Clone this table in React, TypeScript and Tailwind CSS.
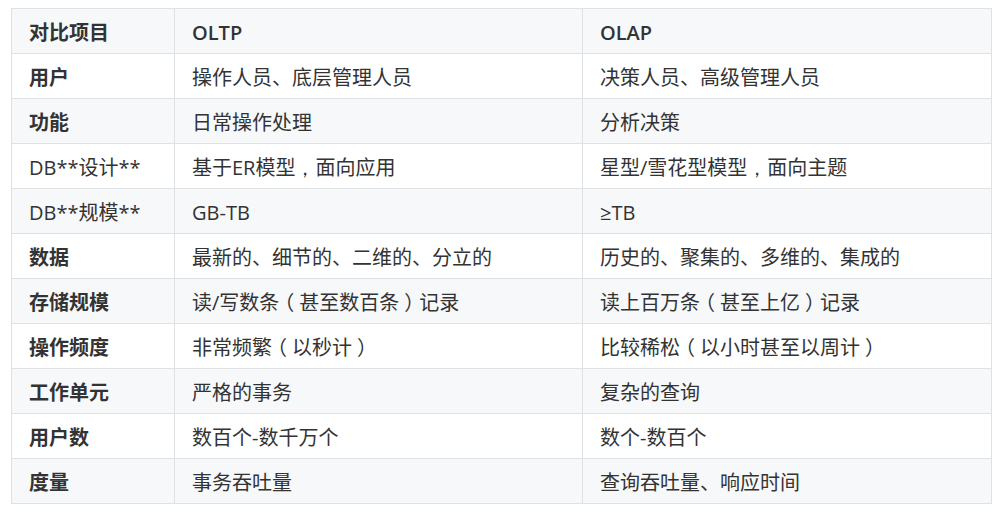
import React from 'react';

const rows: [string, string, string, boolean][] = [
  ['用户', '操作人员、底层管理人员', '决策人员、高级管理人员', true],
  ['功能', '日常操作处理', '分析决策', true],
  ['DB**设计**', '基于ER模型，面向应用', '星型/雪花型模型，面向主题', false],
  ['DB**规模**', 'GB-TB', '≥TB', false],
  ['数据', '最新的、细节的、二维的、分立的', '历史的、聚集的、多维的、集成的', true],
  ['存储规模', '读/写数条（甚至数百条）记录', '读上百万条（甚至上亿）记录', true],
  ['操作频度', '非常频繁（以秒计）', '比较稀松（以小时甚至以周计）', true],
  ['工作单元', '严格的事务', '复杂的查询', true],
  ['用户数', '数百个-数千万个', '数个-数百个', true],
  ['度量', '事务吞吐量', '查询吞吐量、响应时间', true],
];

// full-width punctuation drawn centred in its cell, as in the reference
const Text: React.FC<{ s: string }> = ({ s }) => (
  <>
    {s.split(/([，（）])/).map((part, i) => {
      if (part === '，')
        return (
          <span key={i} className="font-['Liberation_Sans',sans-serif]">
            {part}
          </span>
        );
      if (part === '（' || part === '）')
        return (
          <span key={i} className="px-[0.25em] [font-feature-settings:'halt']">
            {part}
          </span>
        );
      return <React.Fragment key={i}>{part}</React.Fragment>;
    })}
  </>
);

const cell = 'border border-[#dfe2e5] h-[45px] px-[17px] pt-[3px] pb-0 align-middle';

const App: React.FC = () => {
  return (
    <div className="min-h-screen bg-white pt-[8px] pl-[11px] text-[20px] text-[#333333] font-['Open_Sans','Noto_Sans_CJK_SC',sans-serif]">
      <table className="w-[980px] table-fixed border-collapse">
        <colgroup>
          <col className="w-[163px]" />
          <col className="w-[408px]" />
          <col className="w-[409px]" />
        </colgroup>
        <thead>
          <tr className="bg-[#f6f8fa]">
            <th className={`${cell} text-left font-bold`}>对比项目</th>
            <th className={`${cell} text-left font-semibold`}>OLTP</th>
            <th className={`${cell} text-left font-semibold`}>OLAP</th>
          </tr>
        </thead>
        <tbody>
          {rows.map(([k, a, b, bold], i) => (
            <tr key={k} className={i % 2 === 1 ? 'bg-[#f6f8fa]' : 'bg-white'}>
              <td className={`${cell} ${bold ? 'font-bold' : 'font-normal'}`}>{k}</td>
              <td className={cell}>
                <Text s={a} />
              </td>
              <td className={cell}>
                <Text s={b} />
              </td>
            </tr>
          ))}
        </tbody>
      </table>
    </div>
  );
};

export default App;
